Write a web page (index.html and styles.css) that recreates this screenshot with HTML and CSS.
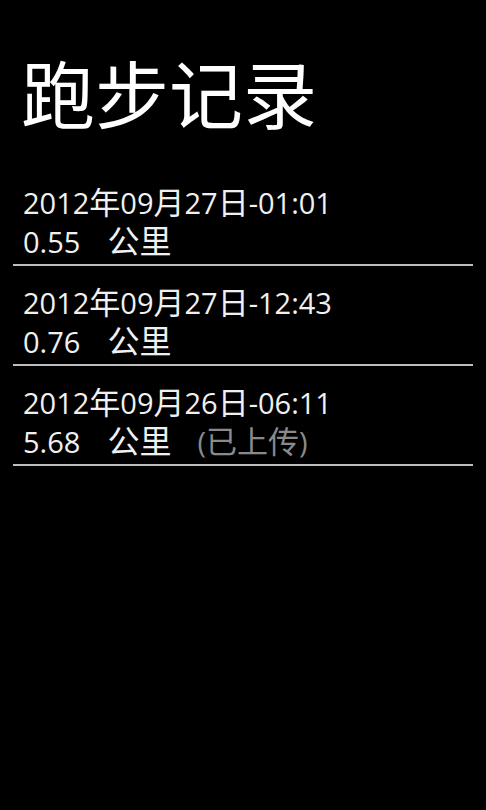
FILE: index.html
```html
<!DOCTYPE html>
<html lang="zh-CN">
<head>
    <meta charset="UTF-8">
    <meta name="viewport" content="width=device-width, initial-scale=1.0">
    <title>跑步记录</title>
    <link rel="stylesheet" href="styles.css">
</head>
<body>

    <div class="page">
        <h1 class="title">跑步记录</h1>

        <ul class="runs">
            <li class="run">
                <div class="run-date">2012<span class="cjk">年</span>09<span class="cjk">月</span>27<span class="cjk">日</span>-01:01</div>
                <div class="run-dist">0.55<span class="unit">公里</span></div>
            </li>
            <li class="run">
                <div class="run-date">2012<span class="cjk">年</span>09<span class="cjk">月</span>27<span class="cjk">日</span>-12:43</div>
                <div class="run-dist">0.76<span class="unit">公里</span></div>
            </li>
            <li class="run">
                <div class="run-date">2012<span class="cjk">年</span>09<span class="cjk">月</span>26<span class="cjk">日</span>-06:11</div>
                <div class="run-dist">5.68<span class="unit">公里</span><span class="status">(<span class="cjk">已上传</span>)</span></div>
            </li>
        </ul>
    </div>

</body>
</html>
```

FILE: styles.css
```css
body {
    margin: 0;
    background: #000;
    color: #fff;
    font-family: "Open Sans", "Noto Sans CJK SC", sans-serif;
    height: 810px;
}
.page {
    padding: 0 13px;
}
.title {
    margin: 54px 0 38px 0;
    padding-left: 8px;
    font-family: "Noto Sans CJK SC", sans-serif;
    font-size: 74px;
    font-weight: 400;
    line-height: 1;
}
.runs {
    list-style: none;
    margin: 0;
    padding: 0;
}
.run {
    padding: 17px 0 3px 10px;
    border-bottom: 2px solid #bdbdbd;
    font-size: 29px;
    line-height: 39px;
    color: #f0f0f0;
}
.cjk {
    display: inline-block;
    font-family: "Noto Sans CJK SC", sans-serif;
    font-size: 31px;
    line-height: 1;
}
.unit {
    display: inline-block;
    margin-left: 27px;
    font-family: "Noto Sans CJK SC", sans-serif;
    font-size: 32px;
    line-height: 1;
}
.status {
    margin-left: 26px;
    color: #8a8a8a;
}
```
